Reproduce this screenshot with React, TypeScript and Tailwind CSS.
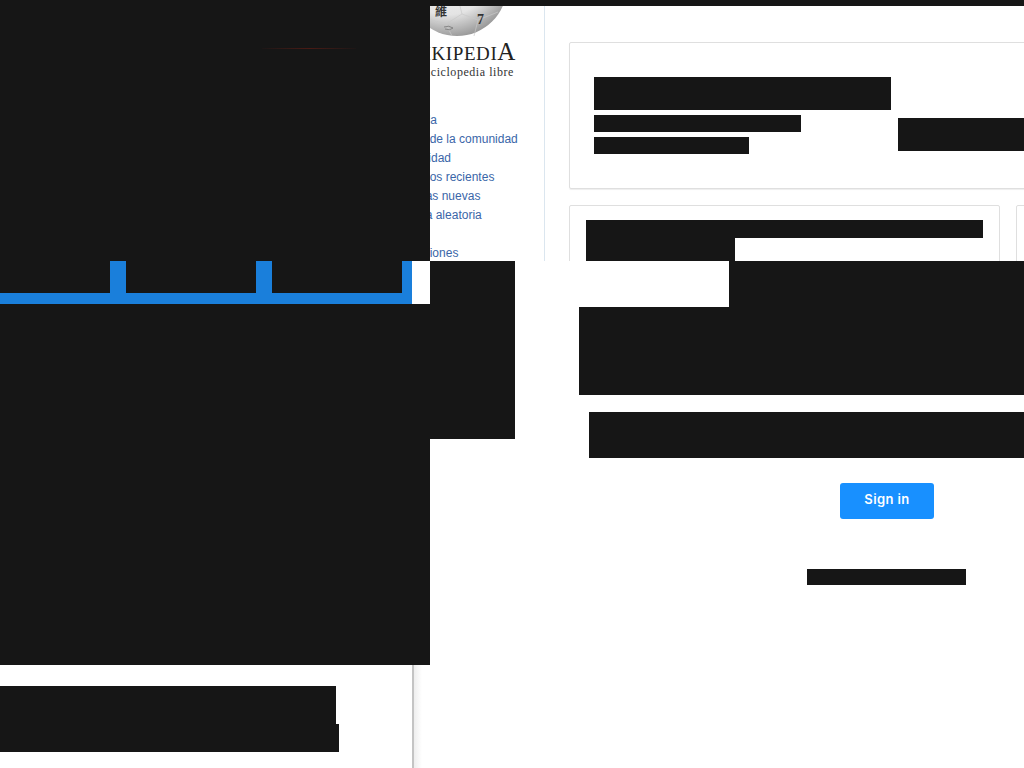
const links = [
  'Portada',
  'Portal de la comunidad',
  'Actualidad',
  'Cambios recientes',
  'Páginas nuevas',
  'Página aleatoria',
  '',
  'Donaciones',
]

function Globe() {
  return (
    <svg width="149" height="31" viewBox="395 6 149 31" className="block">
      <defs>
        <radialGradient id="globeShade" cx="40%" cy="30%" r="75%">
          <stop offset="0%" stopColor="#fafafa" />
          <stop offset="65%" stopColor="#e4e4e4" />
          <stop offset="100%" stopColor="#8f8f8f" />
        </radialGradient>
      </defs>
      <circle cx="457" cy="-14" r="50" fill="url(#globeShade)" />
      <path d="M430 20 L446 24 L452 36 M446 24 L462 14 L478 20 L474 36 M462 14 L460 6 M478 20 L498 12" fill="none" stroke="#c9c9c9" strokeWidth="0.7" />
      <path d="M444 27 q5 -2 9 1 q-3 3 -8 1" fill="none" stroke="#777" strokeWidth="0.8" />
      <text x="435" y="16" fontSize="12" fontWeight="700" fontFamily="'Noto Sans CJK TC', serif" fill="#333">維</text>
      <text x="477" y="24" fontSize="14" fontWeight="700" fontFamily="'Liberation Serif', serif" fill="#333">7</text>
    </svg>
  )
}

function WikiSidebar() {
  return (
    <div className="w-[115px] h-full shrink-0 overflow-hidden border-r border-[#dbe6ef]">
      <div className="-ml-[35px] w-[149px]">
        <Globe />
        <div className="mt-[3px] pr-[17px] text-center text-[#222] leading-[24px] font-['Liberation_Serif',serif] tracking-[0.6px]">
          <span className="text-[19px]">WIKIPEDI</span>
          <span className="text-[25px]">A</span>
        </div>
        <p className="-mt-[2px] pr-[24px] text-center text-[12px] leading-[14px] text-[#333] tracking-[0.55px] font-['Liberation_Serif',serif]">
          La enciclopedia libre
        </p>
        <ul className="mt-[32px] text-[12px] leading-[19px] text-[#3a66a8] font-['Liberation_Sans',sans-serif]">
          {links.map((l, i) => (
            <li key={i} className="h-[19px] whitespace-nowrap">{l}</li>
          ))}
        </ul>
      </div>
    </div>
  )
}

function WikiMain() {
  return (
    <div className="flex-1 min-w-0 overflow-hidden pl-[24px] pt-[36px]">
      <div className="w-[500px] h-[147px] border border-[#dfdfdf] rounded-[2px] pl-[24px] pt-[34px] flex gap-[7px] shadow-[0_1px_1px_#eee]">
        <div>
          <div className="w-[297px] h-[33px] bg-[#161616]" />
          <div className="w-[207px] h-[17px] mt-[5px] bg-[#161616]" />
          <div className="w-[155px] h-[17px] mt-[5px] bg-[#161616]" />
        </div>
        <div className="w-[140px] h-[33px] mt-[41px] bg-[#161616]" />
      </div>
      <div className="flex gap-4 mt-[16px]">
        <div className="w-[431px] h-[80px] shrink-0 border border-[#dfdfdf] rounded-[2px] pl-[16px] pt-[14px]">
          <div className="w-[397px] h-[18px] bg-[#161616]" />
          <div className="w-[149px] h-[40px] bg-[#161616]" />
        </div>
        <div className="w-[100px] h-[80px] shrink-0 border border-[#dfdfdf] rounded-[2px]" />
      </div>
    </div>
  )
}

function TabStrip() {
  return (
    <div className="bg-white">
      <div className="flex h-[32px]">
        <div className="w-[110px] bg-[#161616]" />
        <div className="w-[16px] bg-[#1a7fdb]" />
        <div className="w-[130px] bg-[#161616]" />
        <div className="w-[16px] bg-[#1a7fdb]" />
        <div className="w-[130px] bg-[#161616]" />
        <div className="w-[10px] bg-[#1a7fdb]" />
      </div>
      <div className="w-[412px] h-[11px] bg-[#1a7fdb]" />
    </div>
  )
}

export default function App() {
  return (
    <div className="flex w-[1024px] h-[768px] overflow-hidden bg-white font-['Liberation_Sans',sans-serif]">
      <div className="w-[430px] shrink-0 flex flex-col">
        <div className="h-[261px] bg-[#161616] pl-[262px] pt-[48px]">
          <div className="w-[94px] h-px bg-gradient-to-r from-[#1c1616] via-[#4a1a14] to-[#1c1616]" />
        </div>
        <TabStrip />
        <div className="h-[361px] bg-[#161616]" />
        <div className="flex flex-1 min-h-0">
          <div className="w-[412px] pt-[21px]">
            <div className="w-[336px] h-[38px] bg-[#161616]" />
            <div className="w-[339px] h-[28px] bg-[#161616]" />
          </div>
          <div className="flex-1 border-l-2 border-[#c4c4c4] bg-gradient-to-r from-[#eeeeee] via-white to-white" />
        </div>
      </div>

      <div className="flex-1 min-w-0 flex flex-col">
        <div className="h-[6px] bg-[#161616]" />
        <div className="h-[255px] flex overflow-hidden">
          <WikiSidebar />
          <WikiMain />
        </div>
        <div className="flex flex-1 min-h-0">
          <div className="w-[85px] h-[178px] shrink-0 bg-[#161616]" />
          <div className="flex-1 min-w-0 overflow-hidden">
            <div className="ml-[214px] h-[46px] bg-[#161616]" />
            <div className="ml-[64px] h-[88px] bg-[#161616]" />
            <div className="ml-[74px] mt-[17px] h-[46px] bg-[#161616]" />
            <button className="block ml-[325px] mt-[25px] w-[94px] h-[36px] pb-[2px] rounded-[3px] bg-[#1890ff] text-white text-[13px] font-semibold tracking-[0.4px] font-['Inter',sans-serif]">
              Sign in
            </button>
            <div className="ml-[292px] mt-[50px] w-[159px] h-[16px] bg-[#161616]" />
          </div>
        </div>
      </div>
    </div>
  )
}
